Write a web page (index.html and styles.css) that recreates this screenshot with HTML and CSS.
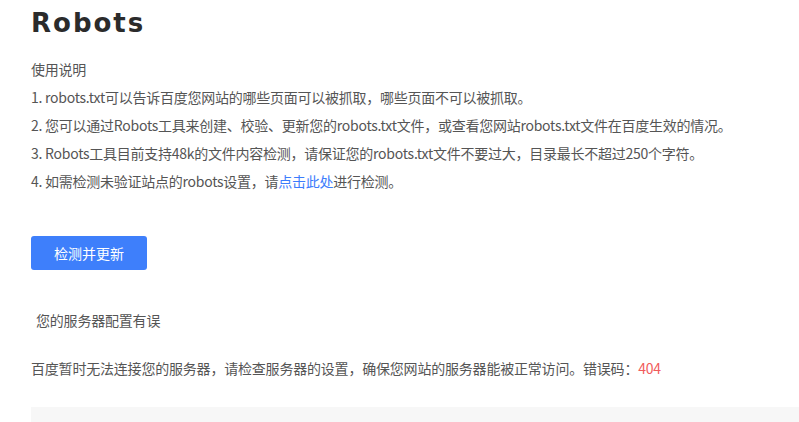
FILE: index.html
```html
<!DOCTYPE html>
<html lang="zh-CN">
<head>
  <meta charset="UTF-8">
  <title>Robots</title>
  <link rel="stylesheet" href="styles.css">
</head>
<body>
  <div class="page">
    <h1 class="title">Robots</h1>

    <div class="intro">
      <p>使用说明</p>
      <p>1. robots.txt可以告诉百度您网站的哪些页面可以被抓取，哪些页面不可以被抓取。</p>
      <p>2. 您可以通过Robots工具来创建、校验、更新您的robots.txt文件，或查看您网站robots.txt文件在百度生效的情况。</p>
      <p>3. Robots工具目前支持48k的文件内容检测，请保证您的robots.txt文件不要过大，目录最长不超过250个字符。</p>
      <p>4. 如需检测未验证站点的robots设置，请<a href="#" class="link">点击此处</a>进行检测。</p>
    </div>

    <button class="btn">检测并更新</button>

    <div class="result">
      <p class="result-title">您的服务器配置有误</p>
      <p class="result-msg">百度暂时无法连接您的服务器，请检查服务器的设置，确保您网站的服务器能被正常访问。错误码：<span class="code">404</span></p>
    </div>

    <div class="box"></div>
  </div>
</body>
</html>
```

FILE: styles.css
```css
body { margin: 0; background: #fff; font-family: "Noto Sans CJK SC", "Noto Sans", sans-serif; font-size: 14px; color: #555; overflow: hidden; }
.page { padding: 0 0 0 31px; }
.title { margin: 0; padding-top: 5px; font-family: "DejaVu Sans", sans-serif; font-size: 26px; font-weight: bold; letter-spacing: 2px; color: #2b2b2b; line-height: 36px; }
.intro { margin-top: 14px; letter-spacing: -0.25px; }
.intro p { margin: 0; line-height: 28px; }
.link { color: #3c7cfc; text-decoration: none; }
.btn { display: block; margin-top: 41px; width: 116px; height: 34px; border: none; border-radius: 3px; background: #3e7ffb; color: #fff; font-family: inherit; font-size: 14px; cursor: pointer; }
.result { margin-top: 40px; letter-spacing: -0.2px; }
.result p { margin: 0; line-height: 20px; }
.result-title { padding-left: 5px; }
.result-msg { margin-top: 28px !important; }
.code { color: #f15b5b; }
.box { margin-top: 29px; height: 40px; background: #f7f7f7; }
```
